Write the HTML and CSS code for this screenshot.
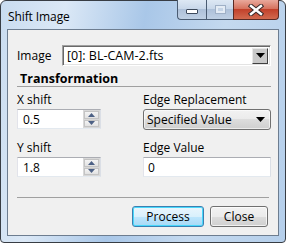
FILE: index.html
```html
<!DOCTYPE html>
<html lang="en">
<head>
  <meta charset="UTF-8">
  <title>Shift Image</title>
  <link rel="stylesheet" href="styles.css">
</head>
<body>
  <div class="window">
    <div class="titlebar">
      <span class="title">Shift Image</span>
      <div class="caption">
        <div class="cap min"><span class="min-icon"></span></div>
        <div class="cap max"><span class="max-icon"></span></div>
        <div class="cap close">
          <svg width="16" height="12" viewBox="0 0 16 12">
            <path d="M3 2 L13 10 M13 2 L3 10" stroke="#3a2a2a" stroke-width="4.5" stroke-linecap="square"/>
            <path d="M3 2 L13 10 M13 2 L3 10" stroke="#fff" stroke-width="2.4" stroke-linecap="square"/>
          </svg>
        </div>
      </div>
    </div>

    <div class="client">
      <div class="image-row">
        <span class="label image-label">Image</span>
        <div class="combo-classic">
          <span class="combo-text">[0]: BL-CAM-2.fts</span>
          <span class="drop"><svg width="9" height="5" viewBox="0 0 9 5"><path d="M0 0 H9 L4.5 5 Z" fill="#000"/></svg></span>
        </div>
      </div>

      <div class="section">Transformation</div>

      <div class="fields">
        <div class="field">
          <span class="label">X shift</span>
          <div class="spin">
            <span class="val">0.5</span>
            <div class="spin-btns">
              <span class="arrow"><svg width="7" height="4" viewBox="0 0 7 4"><path d="M0 4 H7 L3.5 0 Z" fill="#4d6185"/></svg></span>
              <span class="arrow"><svg width="7" height="4" viewBox="0 0 7 4"><path d="M0 0 H7 L3.5 4 Z" fill="#4d6185"/></svg></span>
            </div>
          </div>
        </div>
        <div class="field">
          <span class="label">Edge Replacement</span>
          <div class="combo">
            <span>Specified Value</span>
            <svg width="9" height="5" viewBox="0 0 9 5"><path d="M0 0 H9 L4.5 5 Z" fill="#000"/></svg>
          </div>
        </div>
        <div class="field">
          <span class="label">Y shift</span>
          <div class="spin">
            <span class="val">1.8</span>
            <div class="spin-btns">
              <span class="arrow"><svg width="7" height="4" viewBox="0 0 7 4"><path d="M0 4 H7 L3.5 0 Z" fill="#4d6185"/></svg></span>
              <span class="arrow"><svg width="7" height="4" viewBox="0 0 7 4"><path d="M0 0 H7 L3.5 4 Z" fill="#4d6185"/></svg></span>
            </div>
          </div>
        </div>
        <div class="field">
          <span class="label">Edge Value</span>
          <div class="textbox">0</div>
        </div>
      </div>

      <div class="sep"></div>

      <div class="buttons">
        <button class="btn default">Process</button>
        <button class="btn">Close</button>
      </div>
    </div>
  </div>
</body>
</html>
```

FILE: styles.css
```css
* {
  box-sizing: border-box;
}

body {
  margin: 0;
  font-family: "Open Sans", "Noto Sans", Arial, sans-serif;
  font-size: 12px;
  color: #000;
  background: #fff;
}

.window {
  width: 286px;
  height: 243px;
  border: 1px solid #383d44;
  border-radius: 6px 6px 4px 4px;
  background: linear-gradient(100deg, #c9dcf0 0%, #dbe8f6 20%, #a9c7e8 45%, #c4d9ef 70%, #b5cfeb 100%);
  display: flex;
  flex-direction: column;
}

.titlebar {
  height: 28px;
  display: flex;
  align-items: flex-start;
  padding: 0 6px 0 7px;
}

.title {
  margin-top: 7px;
  font-size: 12px;
  letter-spacing: -0.1px;
}

.caption {
  margin-left: auto;
  display: flex;
  margin-top: -1px;
}

.cap {
  height: 20px;
  border: 1px solid #4a5c72;
  border-top: none;
  display: flex;
  align-items: center;
  justify-content: center;
  background: linear-gradient(#dde8f4 0%, #c9d8ea 45%, #aec1d9 50%, #bfd0e4 100%);
}

.min {
  width: 29px;
  border-radius: 0 0 0 4px;
  border-right: none;
}

.max {
  width: 27px;
  border-right: none;
}

.close {
  width: 46px;
  border-radius: 0 0 4px 0;
  background: linear-gradient(#e9a99c 0%, #d6735f 45%, #c2412b 50%, #d16a4f 100%);
  border-color: #5a2a24;
}

.min-icon {
  width: 12px;
  height: 5px;
  margin-top: 4px;
  background: #fff;
  border: 1px solid #3d4a5c;
  border-radius: 1px;
}

.max-icon {
  width: 11px;
  height: 9px;
  border: 1px solid #9fb0c6;
  box-shadow: inset 0 0 0 2px #e4ecf5;
  background: #c5d4e6;
}

.client {
  flex: 1;
  margin: 0 6px 6px 6px;
  border: 1px solid #6d7d90;
  background: #f0f0f0;
  padding: 15px 7px 0 9px;
}

.label {
  display: block;
  line-height: 15px;
}

.image-row {
  display: flex;
  align-items: center;
  height: 21px;
}

.image-label {
  width: 45px;
}

.combo-classic {
  flex: 1;
  height: 21px;
  display: flex;
  align-items: center;
  background: #fff;
  border-top: 1px solid #a0a0a0;
  border-left: 1px solid #a0a0a0;
  border-bottom: 1px solid #fff;
  border-right: 1px solid #fff;
  box-shadow: inset 1px 1px 0 #696969, inset -1px -1px 0 #e3e3e3;
  padding: 2px 2px 2px 4px;
}

.combo-text {
  flex: 1;
  font-size: 12.5px;
}

.drop {
  width: 16px;
  height: 16px;
  background: #c8c8c8;
  border-right: 1px solid #404040;
  border-bottom: 1px solid #404040;
  border-top: 1px solid #e8e8e8;
  border-left: 1px solid #e8e8e8;
  display: flex;
  align-items: center;
  justify-content: center;
}

.section {
  margin-top: 6px;
  height: 15px;
  padding-left: 3px;
  font-weight: bold;
  font-size: 12.5px;
  line-height: 13px;
  border-bottom: 1px solid #a0a0a0;
}

.fields {
  display: grid;
  grid-template-columns: 84px 128px;
  column-gap: 42px;
  row-gap: 10px;
  margin-top: 5px;
}

.field {
  display: flex;
  flex-direction: column;
  gap: 2px;
}

.spin {
  height: 20px;
  display: flex;
  background: #fff;
  border: 1px solid #abadb3;
  border-color: #abadb3 #dbdfe6 #e3e9ef #e2e3ea;
}

.val {
  flex: 1;
  padding: 1px 0 0 5px;
}

.spin-btns {
  width: 17px;
  display: flex;
  flex-direction: column;
  background: #d8d8d8;
  padding: 1px;
  gap: 1px;
}

.arrow {
  flex: 1;
  display: flex;
  align-items: center;
  justify-content: center;
  background: linear-gradient(#f4f4f4, #e2e2e2);
  border: 1px solid #c4c4c4;
}

.combo {
  height: 21px;
  display: flex;
  align-items: center;
  justify-content: space-between;
  padding: 0 5px 0 3px;
  border: 1px solid #707070;
  border-radius: 3px;
  background: linear-gradient(#f2f2f2 0%, #ebebeb 50%, #dddddd 50%, #cfcfcf 100%);
  box-shadow: inset 0 0 0 1px rgba(255, 255, 255, 0.6);
}

.textbox {
  height: 20px;
  background: #fff;
  border: 1px solid #abadb3;
  border-color: #abadb3 #dbdfe6 #e3e9ef #e2e3ea;
  padding: 1px 0 0 4px;
}

.sep {
  margin-top: 20px;
  margin-right: 2px;
  border-top: 1px solid #a0a0a0;
}

.buttons {
  display: flex;
  justify-content: flex-end;
  gap: 6px;
  margin-top: 8px;
  padding-right: 3px;
}

.btn {
  height: 21px;
  font-family: inherit;
  font-size: 12px;
  border: 1px solid #707070;
  border-radius: 3px;
  background: linear-gradient(#f2f2f2 0%, #ebebeb 50%, #dddddd 50%, #cfcfcf 100%);
  box-shadow: inset 0 0 0 1px rgba(255, 255, 255, 0.7);
  padding: 0;
  width: 58px;
}

.btn.default {
  width: 72px;
  border-color: #3c7fb1;
  background: linear-gradient(#eaf6fd 0%, #d9f0fc 50%, #bee6fd 50%, #a7d9f5 100%);
  box-shadow: inset 0 0 0 1px #48d8fb;
}
```
